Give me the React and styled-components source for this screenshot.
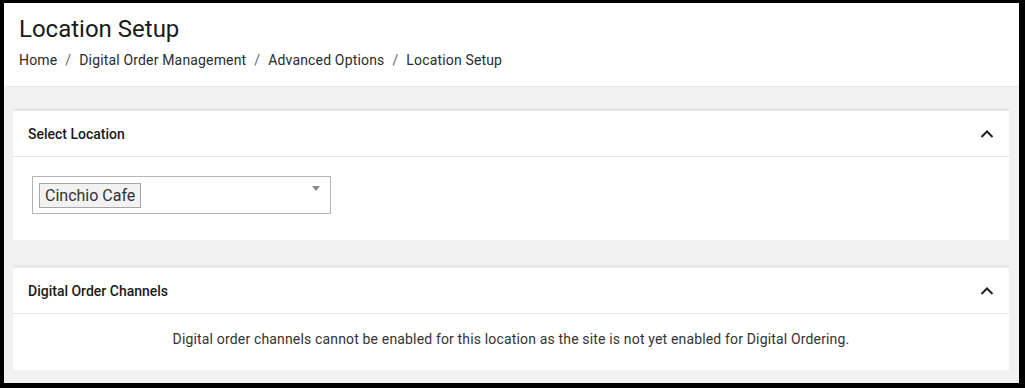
import styled, { createGlobalStyle } from "styled-components";

const GlobalStyle = createGlobalStyle`
  html, body {
    margin: 0;
    padding: 0;
    background: #000;
  }
  body {
    font-family: Roboto, "Liberation Sans", sans-serif;
    color: #212529;
  }
`;

const Frame = styled.div`
  margin: 3px 6px 5px 4px;
  height: 380px;
  background: #f2f2f2;
  display: flex;
  flex-direction: column;
  overflow: hidden;
`;

const PageHeader = styled.header`
  background: #fff;
  height: 84px;
  box-sizing: border-box;
  padding: 12px 15px 0;
  border-bottom: 1px solid #ebebeb;
  h1 {
    margin: 0;
    font-size: 24px;
    font-weight: 400;
    line-height: 28px;
    color: #1a1a1a;
  }
`;

const Crumbs = styled.nav`
  display: flex;
  gap: 8px;
  margin-top: 9px;
  font-size: 14px;
  line-height: 16px;
  letter-spacing: 0.16px;
  color: #2b2b2b;
  span.sep {
    color: #666;
  }
`;

const Main = styled.main`
  flex: 1;
  padding: 21px 10px 0 9px;
  display: flex;
  flex-direction: column;
  gap: 25px;
`;

const Card = styled.section`
  background: #fff;
  border-top: 3px solid #e5e8eb;
`;

const CardHeader = styled.div`
  height: 46px;
  box-sizing: border-box;
  border-bottom: 1px solid #e6e6e6;
  display: flex;
  align-items: center;
  justify-content: space-between;
  padding: 0 15px 0 15px;
  h2 {
    margin: 0;
    font-size: 14px;
    font-weight: 500;
    color: #1a1a1a;
  }
`;

const CardBody = styled.div`
  padding: ${(p) => p.$pad};
  height: ${(p) => p.$height};
  box-sizing: border-box;
  text-align: ${(p) => (p.$center ? "center" : "left")};
  font-size: 14px;
  letter-spacing: 0.16px;
  color: #333;
`;

const SelectBox = styled.div`
  width: 299px;
  height: 38px;
  box-sizing: border-box;
  border: 1px solid #b5b5b5;
  display: flex;
  align-items: center;
  justify-content: space-between;
  padding: 0 10px 0 6px;
  letter-spacing: 0;
`;

const Tag = styled.span`
  display: inline-block;
  background: #f2f2f2;
  border: 1px solid #a6a6a6;
  padding: 2px 5px 1px 5px;
  font-size: 16px;
  line-height: 20px;
  color: #333;
`;

const Caret = styled.span`
  align-self: flex-start;
  margin-top: 9px;
  width: 0;
  height: 0;
  border-left: 4px solid transparent;
  border-right: 4px solid transparent;
  border-top: 5px solid #888;
`;

const Chevron = () => (
  <svg width="14" height="10" viewBox="0 0 14 10">
    <path d="M1.5 8 L7 2.5 L12.5 8" fill="none" stroke="#222" strokeWidth="2" />
  </svg>
);

export default function App() {
  const crumbs = ["Home", "Digital Order Management", "Advanced Options", "Location Setup"];
  return (
    <>
      <GlobalStyle />
      <Frame>
        <PageHeader>
          <h1>Location Setup</h1>
          <Crumbs>
            {crumbs.map((c, i) => (
              <>
                {i > 0 && <span className="sep">/</span>}
                <span>{c}</span>
              </>
            ))}
          </Crumbs>
        </PageHeader>
        <Main>
          <Card>
            <CardHeader>
              <h2>Select Location</h2>
              <Chevron />
            </CardHeader>
            <CardBody $pad="19px 19px" $height="83px">
              <SelectBox>
                <Tag>Cinchio Cafe</Tag>
                <Caret />
              </SelectBox>
            </CardBody>
          </Card>
          <Card>
            <CardHeader>
              <h2>Digital Order Channels</h2>
              <Chevron />
            </CardHeader>
            <CardBody $pad="17px 15px" $height="56px" $center>
              Digital order channels cannot be enabled for this location as the site is not yet enabled for Digital Ordering.
            </CardBody>
          </Card>
        </Main>
      </Frame>
    </>
  );
}
